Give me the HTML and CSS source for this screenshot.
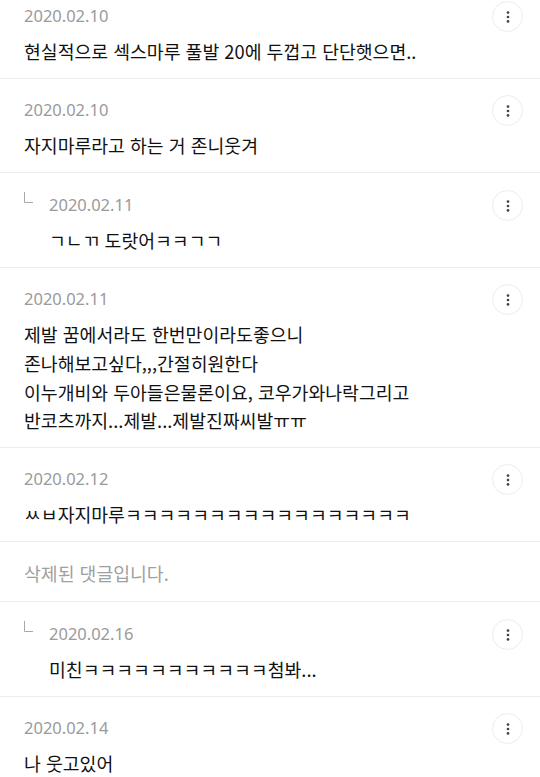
FILE: index.html
```html
<!DOCTYPE html>
<html lang="ko">
<head>
<meta charset="UTF-8"><meta name="viewport" content="width=device-width,initial-scale=1">
<title>댓글</title>
<link rel="stylesheet" href="styles.css">
</head>
<body>
<ul class="comments">
  <li class="comment">
    <div class="content">
      <div class="date">2020.02.10</div>
      <p class="text">현실적으로 섹스마루 풀발 20에 두껍고 단단햇으면..</p>
    </div>
    <button class="more" aria-label="더보기"><svg width="4" height="12" viewBox="0 0 4 12"><circle cx="2" cy="1.6" r="1.35"/><circle cx="2" cy="6" r="1.35"/><circle cx="2" cy="10.4" r="1.35"/></svg></button>
  </li>
  <li class="comment">
    <div class="content">
      <div class="date">2020.02.10</div>
      <p class="text">자지마루라고 하는 거 존니웃겨</p>
    </div>
    <button class="more" aria-label="더보기"><svg width="4" height="12" viewBox="0 0 4 12"><circle cx="2" cy="1.6" r="1.35"/><circle cx="2" cy="6" r="1.35"/><circle cx="2" cy="10.4" r="1.35"/></svg></button>
  </li>
  <li class="comment reply">
    <span class="branch"><svg width="9" height="11" viewBox="0 0 9 11"><path d="M.5 0v10.5H9"/></svg></span>
    <div class="content">
      <div class="date">2020.02.11</div>
      <p class="text">ㄱㄴㄲ 도랏어ㅋㅋㄱㄱ</p>
    </div>
    <button class="more" aria-label="더보기"><svg width="4" height="12" viewBox="0 0 4 12"><circle cx="2" cy="1.6" r="1.35"/><circle cx="2" cy="6" r="1.35"/><circle cx="2" cy="10.4" r="1.35"/></svg></button>
  </li>
  <li class="comment">
    <div class="content">
      <div class="date">2020.02.11</div>
      <p class="text">제발 꿈에서라도 한번만이라도좋으니<br>존나해보고싶다,,,간절히원한다<br>이누개비와 두아들은물론이요, 코우가와나락그리고<br>반코츠까지...제발...제발진짜씨발ㅠㅠ</p>
    </div>
    <button class="more" aria-label="더보기"><svg width="4" height="12" viewBox="0 0 4 12"><circle cx="2" cy="1.6" r="1.35"/><circle cx="2" cy="6" r="1.35"/><circle cx="2" cy="10.4" r="1.35"/></svg></button>
  </li>
  <li class="comment">
    <div class="content">
      <div class="date">2020.02.12</div>
      <p class="text">ㅆㅂ자지마루ㅋㅋㅋㅋㅋㅋㅋㅋㅋㅋㅋㅋㅋㅋㅋㅋㅋ</p>
    </div>
    <button class="more" aria-label="더보기"><svg width="4" height="12" viewBox="0 0 4 12"><circle cx="2" cy="1.6" r="1.35"/><circle cx="2" cy="6" r="1.35"/><circle cx="2" cy="10.4" r="1.35"/></svg></button>
  </li>
  <li class="comment deleted">
    <p class="text">삭제된 댓글입니다.</p>
  </li>
  <li class="comment reply">
    <span class="branch"><svg width="9" height="11" viewBox="0 0 9 11"><path d="M.5 0v10.5H9"/></svg></span>
    <div class="content">
      <div class="date">2020.02.16</div>
      <p class="text">미친ㅋㅋㅋㅋㅋㅋㅋㅋㅋㅋㅋ첨봐...</p>
    </div>
    <button class="more" aria-label="더보기"><svg width="4" height="12" viewBox="0 0 4 12"><circle cx="2" cy="1.6" r="1.35"/><circle cx="2" cy="6" r="1.35"/><circle cx="2" cy="10.4" r="1.35"/></svg></button>
  </li>
  <li class="comment">
    <div class="content">
      <div class="date">2020.02.14</div>
      <p class="text">나 웃고있어</p>
    </div>
    <button class="more" aria-label="더보기"><svg width="4" height="12" viewBox="0 0 4 12"><circle cx="2" cy="1.6" r="1.35"/><circle cx="2" cy="6" r="1.35"/><circle cx="2" cy="10.4" r="1.35"/></svg></button>
  </li>
</ul>
</body>
</html>
```

FILE: styles.css
```css
body{margin:0;background:#fff;color:#111;font-family:"Noto Sans CJK KR","Noto Sans",sans-serif}
.comments{list-style:none;margin:-15px 0 0;padding:0}
.comment{display:flex;align-items:flex-start;padding:18px 17px 12.25px 24px;border-bottom:1px solid #ececec}
.reply{padding-top:19px}
.branch{flex:none;width:25px;display:flex}
.branch svg{fill:none;stroke:#a8a8a8;stroke-width:1}
.content{flex:1;min-width:0}
.date{font-family:"Noto Sans",sans-serif;font-size:16.5px;line-height:26px;color:#9a9a9a}
.text{margin:8px 0 0;font-size:18.3px;line-height:28.75px}
.deleted{padding-bottom:15px}
.deleted .text{margin:0;line-height:26px;color:#a0a0a0}
.more{flex:none;display:flex;align-items:center;justify-content:center;width:31px;height:31px;margin-top:-2px;padding:0;border:1px solid #ececec;border-radius:50%;background:#fff;cursor:pointer}
.more svg{fill:#444}
```
